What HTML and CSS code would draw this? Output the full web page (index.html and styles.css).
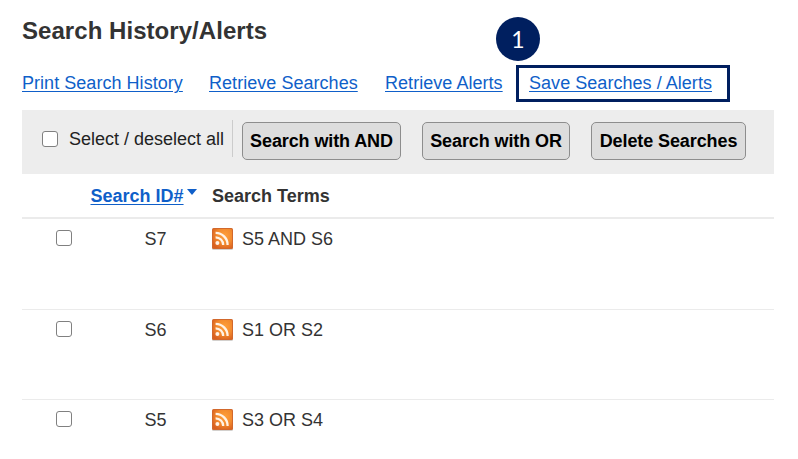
FILE: index.html
```html
<!DOCTYPE html>
<html lang="en">
<head>
	<meta charset="utf-8">
	<title>Search History/Alerts</title>
	<link rel="stylesheet" href="styles.css">
</head>
<body>
	<!-- rss icon, used once per row -->
	<svg class="defs" width="0" height="0">
		<defs>
			<radialGradient id="orange" cx="0.62" cy="0.35" r="0.75">
				<stop offset="0" stop-color="#ff9f3a"/>
				<stop offset="0.55" stop-color="#f28a2e"/>
				<stop offset="1" stop-color="#d9601f"/>
			</radialGradient>
			<symbol id="rss" viewBox="0 0 21 22">
				<rect x="0" y="1" width="21" height="21" rx="1.5" fill="#d3d0cd"/>
				<rect x="0" y="0" width="21" height="21" rx="1.5" fill="#d2682c"/>
				<rect x="1" y="1" width="19" height="19" rx="1" fill="url(#orange)"/>
				<circle cx="5.4" cy="15.1" r="2" fill="#fff3e6"/>
				<path d="M3.6 9.3a7.6 7.6 0 0 1 7.6 7.6M3.6 4.9a12 12 0 0 1 12 12" fill="none" stroke="#fff3e6" stroke-width="2.3"/>
			</symbol>
		</defs>
	</svg>

	<div class="container">
		<h1 class="title">Search History/Alerts</h1>

		<div class="links">
			<a class="print" href="#">Print Search History</a>
			<a class="searches" href="#">Retrieve Searches</a>
			<a class="alerts" href="#">Retrieve Alerts</a>
			<span class="highlight">
				<span class="step">1</span>
				<a class="save" href="#">Save Searches / Alerts</a>
			</span>
		</div>

		<div class="toolbar">
			<label class="select-all"><input type="checkbox"><span>Select / deselect all</span></label>
			<button class="and">Search with AND</button>
			<button class="or">Search with OR</button>
			<button class="delete">Delete Searches</button>
		</div>

		<div class="row head">
			<span></span>
			<span class="sort"><a href="#">Search ID#</a><i class="arrow"></i></span>
			<span class="terms-title">Search Terms</span>
		</div>
		<div class="row">
			<input type="checkbox">
			<span class="id">S7</span>
			<span class="terms"><svg class="rss"><use href="#rss"/></svg><span>S5 AND S6</span></span>
		</div>
		<div class="row">
			<input type="checkbox">
			<span class="id">S6</span>
			<span class="terms"><svg class="rss"><use href="#rss"/></svg><span>S1 OR S2</span></span>
		</div>
		<div class="row last">
			<input type="checkbox">
			<span class="id">S5</span>
			<span class="terms"><svg class="rss"><use href="#rss"/></svg><span>S3 OR S4</span></span>
		</div>
	</div>
</body>
</html>
```
FILE: styles.css
```css
body {
	margin: 0;
	background-color: #fff;
	font-family: "Liberation Sans", Arial, sans-serif;
	font-size: 18px;
	line-height: 20px;
	color: #333;
}

.defs {
	display: block;
}

.container {
	width: 752px;
	margin-left: 22px;
}

.title {
	margin: 0;
	padding-top: 17px;
	font-size: 24px;
	line-height: 28px;
	letter-spacing: 0.05px;
}

a {
	color: #0f5fc9;
	text-decoration: underline;
	text-underline-offset: 2px;
	text-decoration-thickness: 1px;
}

/* Links above the toolbar */
.links {
	display: flex;
	align-items: flex-start;
	height: 37px;
	margin-top: 20px;
	margin-bottom: 8px;
	white-space: nowrap;
	letter-spacing: 0.04px;
}

.print,
.searches,
.alerts {
	margin-top: 8px;
}

.print {
	width: 187px;
}

.searches {
	width: 176px;
}

.alerts {
	width: 131px;
}

.highlight {
	position: relative;
	box-sizing: border-box;
	width: 214px;
	height: 37px;
	padding: 5px 10px;
	border: 3px solid #001f5f;
}

.highlight a {
	display: block;
	line-height: 20px;
}

.step {
	position: absolute;
	left: -23px;
	top: -51px;
	width: 44px;
	height: 44px;
	border-radius: 50%;
	background-color: #001f5f;
	color: #fff;
	font-family: Lato, sans-serif;
	font-size: 23px;
	line-height: 44px;
	text-align: center;
}

/* Grey bar with the buttons */
.toolbar {
	display: flex;
	align-items: flex-start;
	box-sizing: border-box;
	height: 64px;
	padding: 10px 20px;
	background-color: #ededed;
	white-space: nowrap;
}

.select-all {
	display: flex;
	box-sizing: border-box;
	width: 191px;
	height: 37px;
	margin-right: 9px;
	border-right: 1px solid #ccc;
	color: #222;
}

.select-all input {
	margin-top: 11px;
	margin-right: 11px;
}

.select-all span {
	padding-top: 9px;
}

input {
	appearance: none;
	flex: none;
	box-sizing: border-box;
	width: 16px;
	height: 16px;
	margin: 0;
	border: 1.5px solid #808080;
	border-radius: 3px;
	background-color: #fff;
}

button {
	box-sizing: border-box;
	height: 38px;
	margin: 2px 0 0;
	padding: 0;
	border: 1px solid #8d8d8d;
	border-radius: 5px;
	background-color: #ddd;
	color: #000;
	font: bold 18px/20px "Liberation Sans", Arial, sans-serif;
	letter-spacing: -0.1px;
}

.and {
	width: 159px;
}

.or {
	width: 148px;
	margin-left: 21px;
}

.delete {
	width: 155px;
	margin-left: 21px;
}

/* Result rows */
.row {
	display: grid;
	grid-template-columns: 68px 122px 1fr;
	box-sizing: border-box;
	height: 90.5px;
	padding-top: 10px;
	border-bottom: 1px solid #ebebeb;
}

.row input {
	margin: 1px 0 0 34px;
}

.id {
	padding-left: 54.5px;
}

.terms {
	display: flex;
}

.rss {
	width: 21px;
	height: 22px;
	margin-top: -1px;
	margin-right: 9px;
}

.head {
	height: 45px;
	padding-top: 12px;
	border-bottom: 2px solid #ebebeb;
	font-weight: bold;
}

.last {
	height: 50px;
	border-bottom: 0;
}

.sort {
	display: flex;
	padding-left: 0.5px;
}

.arrow {
	width: 0;
	height: 0;
	margin: 3px 0 0 3px;
	border: 5px solid transparent;
	border-top: 6px solid #0f5fc9;
	border-bottom: 0;
}
```
